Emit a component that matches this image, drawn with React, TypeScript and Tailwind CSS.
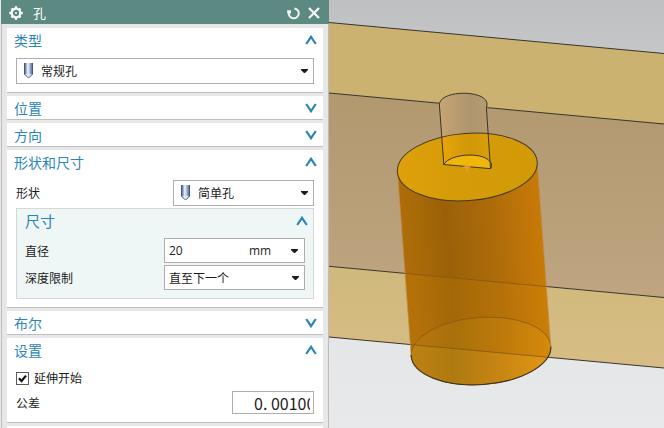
import React, { useState } from 'react';
import clsx from 'clsx';

interface SectionProps {
  title: string;
  open: boolean;
  onToggle: () => void;
  children?: React.ReactNode;
}

function Chevron({ open }: { open: boolean }) {
  return (
    <svg width="12" height="10" viewBox="0 0 12 10" fill="none" stroke="#2a86b8" strokeWidth="2.2">
      {open ? <path d="M1.2 9 L6 1.8 L10.8 9" /> : <path d="M1.2 1 L6 8.2 L10.8 1" />}
    </svg>
  );
}

function Caret() {
  return (
    <svg width="7" height="4" viewBox="0 0 7 4" className="pointer-events-none absolute right-[6px] top-1/2 -translate-y-1/2">
      <path d="M0 0 H7 V1 L4 4 H3 L0 1 Z" fill="#1c1c1c" />
    </svg>
  );
}

function HoleIcon() {
  return (
    <svg width="11" height="16" viewBox="0 0 11 16" className="pointer-events-none absolute left-[7px] top-1/2 -translate-y-1/2">
      <defs>
        <linearGradient id="hole" x1="0" x2="1" y1="0" y2="0">
          <stop offset="0" stopColor="#35497a" />
          <stop offset="0.2" stopColor="#8390b4" />
          <stop offset="0.42" stopColor="#f4f6fa" />
          <stop offset="0.65" stopColor="#a9b5d3" />
          <stop offset="1" stopColor="#3c5189" />
        </linearGradient>
      </defs>
      <path d="M1 0 H10 V11 L5.5 15.4 L1 11 Z" fill="url(#hole)" />
      <path d="M1.5 0 V11 L5.5 15 L9.5 11 V0" fill="none" stroke="#3f5488" />
      <path d="M2 11 H9 L5.5 14.4 Z" fill="#dfe4ef" />
    </svg>
  );
}

function Section({ title, open, onToggle, children }: SectionProps) {
  return (
    <section className="border-b border-[#c0c0c0] bg-white">
      <button
        onClick={onToggle}
        aria-expanded={open}
        className={clsx('flex w-full items-center justify-between pl-[7px] pr-[6px] text-sm leading-6 text-[#2a86b8]', open ? 'h-6' : 'h-[23px]')}
      >
        {title}
        <Chevron open={open} />
      </button>
      {open && <div className="px-[9px] pb-2 pt-[6px]">{children}</div>}
    </section>
  );
}

interface DropdownProps {
  id: string;
  label?: string;
  options: string[];
  icon?: boolean;
}

function Dropdown({ id, label, options, icon }: DropdownProps) {
  return (
    <div className="relative">
      {icon && <HoleIcon />}
      <select
        id={id}
        aria-label={label}
        className={clsx('block w-full appearance-none border border-[#adadad] bg-white text-xs text-[#1c1c1c]', icon ? 'h-[26px] pl-6' : 'h-[25px] pl-1')}
      >
        {options.map(option => (
          <option key={option}>{option}</option>
        ))}
      </select>
      <Caret />
    </div>
  );
}

function Viewport() {
  return (
    <svg viewBox="329 0 335 428" preserveAspectRatio="xMidYMid slice" className="h-full w-full" role="img">
      <defs>
        <linearGradient id="sky" x1="0" x2="0" y1="0" y2="1">
          <stop offset="0" stopColor="#bfc0c2" />
          <stop offset="0.8" stopColor="#e4e6e8" />
          <stop offset="1" stopColor="#e7e9eb" />
        </linearGradient>
        <linearGradient id="wall" x1="0" x2="0" y1="0" y2="1">
          <stop offset="0" stopColor="#b1986f" />
          <stop offset="1" stopColor="#bfa580" />
        </linearGradient>
        <linearGradient id="ledge" x1="0" x2="0" y1="0" y2="1">
          <stop offset="0" stopColor="#d0b97c" />
          <stop offset="1" stopColor="#d7bd85" />
        </linearGradient>
        <linearGradient id="body" gradientUnits="userSpaceOnUse" x1="385" x2="525" y1="0" y2="0" gradientTransform="skewX(4.2)">
          <stop offset="0" stopColor="#b06d0a" />
          <stop offset="0.15" stopColor="#a66808" />
          <stop offset="0.32" stopColor="#9b6007" />
          <stop offset="0.45" stopColor="#a26509" />
          <stop offset="0.7" stopColor="#b06d0a" />
          <stop offset="0.88" stopColor="#c07508" />
          <stop offset="1" stopColor="#c67a06" />
        </linearGradient>
        <linearGradient id="base" x1="0" x2="1" y1="0" y2="0">
          <stop offset="0" stopColor="#b9770d" />
          <stop offset="0.3" stopColor="#a8700b" />
          <stop offset="0.65" stopColor="#bd7a0b" />
          <stop offset="1" stopColor="#d68a0a" />
        </linearGradient>
        <linearGradient id="baseLow" gradientUnits="userSpaceOnUse" x1="411" x2="551" y1="0" y2="0">
          <stop offset="0" stopColor="#bf8012" />
          <stop offset="0.3" stopColor="#ae7a10" />
          <stop offset="0.65" stopColor="#c98612" />
          <stop offset="1" stopColor="#e39714" />
        </linearGradient>
        <linearGradient id="top" x1="0" x2="1" y1="0" y2="0">
          <stop offset="0" stopColor="#dea10b" />
          <stop offset="0.4" stopColor="#d59b08" />
          <stop offset="1" stopColor="#d39a08" />
        </linearGradient>
        <linearGradient id="bore" x1="0" x2="1" y1="0" y2="0">
          <stop offset="0" stopColor="#c7a473" />
          <stop offset="0.6" stopColor="#ae956f" />
          <stop offset="1" stopColor="#b59c74" />
        </linearGradient>
        <linearGradient id="boreTop" x1="0" x2="1" y1="0" y2="0">
          <stop offset="0" stopColor="#eaa606" />
          <stop offset="0.6" stopColor="#d09709" />
          <stop offset="1" stopColor="#dc9f08" />
        </linearGradient>
        <clipPath id="bodyClip">
          <path d="M397.3 170 V130 H537.3 V163 L550.8 347 V400 H411.1 V355 Z" />
        </clipPath>
        <clipPath id="hullClip">
          <path d="M397.3 170 L411.1 355 L550.8 347 L537.3 163 Z" />
          <ellipse cx="481" cy="351" rx="70.1" ry="33.6" transform="rotate(-4.15 481 351)" />
        </clipPath>
        <clipPath id="baseClip">
          <ellipse cx="481" cy="351" rx="70.1" ry="33.6" transform="rotate(-4.15 481 351)" />
        </clipPath>
        <clipPath id="frontClip">
          <path d="M405 355.4 L557 346.6 V400 H405 Z" />
        </clipPath>
        <clipPath id="topClip">
          <ellipse cx="467.3" cy="167" rx="70.1" ry="33.6" transform="rotate(-4.15 467.3 167)" />
        </clipPath>
      </defs>

      {/* block */}
      <rect x="329" width="335" height="428" fill="url(#sky)" />
      <path d="M329 22.5 L664 53.5 V124 L329 93 Z" fill="#cbb271" />
      <path d="M329 93 L664 124 V297.5 L329 266.3 Z" fill="url(#wall)" />
      <path d="M329 266.3 L664 297.5 V368 L329 337 Z" fill="url(#ledge)" />
      <g stroke="#37352d" strokeWidth="1">
        <path d="M329 22.5 L664 53.5" />
        <path d="M329 93 L664 124" />
        <path d="M329 266.3 L664 297.5" />
        <path d="M329 337 L664 368" />
      </g>

      {/* large cylinder */}
      <g clipPath="url(#hullClip)">
        <rect x="390" y="130" width="170" height="260" fill="url(#body)" />
        <path d="M329 266.3 L664 297.5 V400 H329 Z" fill="#e39c08" opacity="0.12" />
        <path d="M329 266.3 L664 297.5" stroke="#87570e" strokeWidth="0.8" />
      </g>
      <g clipPath="url(#baseClip)">
        <rect x="411" y="315" width="140" height="72" fill="url(#base)" />
        <path d="M329 337 L664 368 V400 H329 Z" fill="url(#baseLow)" />
      </g>
      <g clipPath="url(#bodyClip)">
        <path d="M329 337 L664 368" stroke="#855510" strokeWidth="0.8" />
      </g>
      <ellipse cx="481" cy="351" rx="70.1" ry="33.6" transform="rotate(-4.15 481 351)" fill="none" stroke="#8d5b10" strokeWidth="0.9" />
      <g clipPath="url(#frontClip)">
        <ellipse cx="481" cy="351" rx="70.1" ry="33.6" transform="rotate(-4.15 481 351)" fill="none" stroke="#3b3225" strokeWidth="1" />
      </g>
      <path d="M397.3 170 L411.1 355 M537.3 163 L550.8 347" stroke="#bd9153" strokeWidth="0.7" />
      <ellipse cx="467.3" cy="167" rx="70.1" ry="33.6" transform="rotate(-4.15 467.3 167)" fill="url(#top)" />

      {/* small bore */}
      <path d="M443.8 164.5 L439.4 105 C439 89.5 487 89.5 487 104 L491 168.7 Z" fill="url(#bore)" />
      <g clipPath="url(#topClip)">
        <path d="M439.3 105 L487 104 L491 168.7 L443.8 164.5 Z" fill="url(#boreTop)" />
      </g>
      <ellipse cx="467.3" cy="167" rx="70.1" ry="33.6" transform="rotate(-4.15 467.3 167)" fill="none" stroke="#443a23" strokeWidth="1" />
      <path d="M443.8 164.5 C450 153 487 151 491.5 164 Q491.8 166.5 490.7 168.7 Z" fill="#f0b60a" />
      <g fill="none" stroke="#39352a" strokeWidth="1">
        <path d="M443.8 164.5 L439.4 105 C439 89.5 487 89.5 487 104 Q487 106 486.4 108 L490.5 168.5" />
        <path d="M443.8 164.5 C450 153 487 151 491.5 164 Q491.8 166.5 490.7 168.7 Z" />
      </g>
      <path d="M467 162.5 V171.5 M463.5 167 H470.5" stroke="#f39b40" strokeWidth="1.3" />
    </svg>
  );
}

function App() {
  const [open, setOpen] = useState({
    type: true,
    position: false,
    direction: false,
    shape: true,
    boolean: false,
    settings: true
  });
  const [sizeOpen, setSizeOpen] = useState(true);
  const [extendStart, setExtendStart] = useState(true);
  const [diameter, setDiameter] = useState('20');
  const [tolerance, setTolerance] = useState('0. 00100');

  const toggle = (key: keyof typeof open) => setOpen(prev => ({ ...prev, [key]: !prev[key] }));

  return (
    <div className="flex h-screen overflow-hidden bg-[#e7e9eb] font-['Noto_Sans_CJK_SC',sans-serif] text-xs text-[#1c1c1c]">
      <aside className="flex w-[329px] shrink-0 flex-col overflow-hidden pl-px">
        <header className="flex h-6 shrink-0 items-center bg-[#5c8a82] pl-2 pr-[9px] pt-[2px] text-white">
          <svg width="14" height="14" viewBox="0 0 14 14" fill="none" stroke="white">
            <circle cx="7" cy="7" r="4.3" strokeWidth="2.2" />
            <g strokeWidth="2.4">
              <path d="M7 0.3 V3 M7 11 V13.7 M0.3 7 H3 M11 7 H13.7" />
              <path d="M2.5 2.5 L4 4 M10 10 L11.5 11.5 M11.5 2.5 L10 4 M4 10 L2.5 11.5" />
            </g>
            <circle cx="7" cy="7" r="1" fill="white" stroke="none" />
          </svg>
          <h1 className="ml-[10px] text-[13px] leading-5">孔</h1>
          <button aria-label="重置" className="ml-auto">
            <svg width="13" height="13" viewBox="0 0 13 13" fill="none" stroke="#f0f5f4" strokeWidth="2">
              <path d="M7.4 1.4 A5 5 0 1 1 1.9 5.2" />
              <path d="M0 3.2 H4 V6.4 H0.4 Z" fill="#f0f5f4" stroke="none" />
            </svg>
          </button>
          <button aria-label="关闭" className="ml-2">
            <svg width="12" height="12" viewBox="0 0 12 12" stroke="white" strokeWidth="2.2">
              <path d="M1 1 L11 11 M11 1 L1 11" />
            </svg>
          </button>
        </header>

        <div className="flex flex-1 flex-col gap-[3px] border-x border-[#bcbcbc] bg-[#e7e7e7] px-[5px] pt-1">
          <Section title="类型" open={open.type} onToggle={() => toggle('type')}>
            <Dropdown id="type" label="类型" options={['常规孔']} icon />
          </Section>
          <Section title="位置" open={open.position} onToggle={() => toggle('position')} />
          <Section title="方向" open={open.direction} onToggle={() => toggle('direction')} />
          <Section title="形状和尺寸" open={open.shape} onToggle={() => toggle('shape')}>
            <div className="flex items-center justify-between">
              <label htmlFor="shape">形状</label>
              <div className="w-[141px]">
                <Dropdown id="shape" options={['简单孔']} icon />
              </div>
            </div>
            <div className="mt-[2px] border border-[#d5d8d8] bg-[#eff6f6] pb-2">
              <button
                onClick={() => setSizeOpen(!sizeOpen)}
                aria-expanded={sizeOpen}
                className="flex h-6 w-full items-center justify-between pl-2 pr-[5px] text-[15px] leading-6 text-[#2a86b8]"
              >
                尺寸
                <Chevron open={sizeOpen} />
              </button>
              {sizeOpen && (
                <div className="flex flex-col gap-[2px] px-2 pt-[5px]">
                  <div className="flex items-center justify-between">
                    <label htmlFor="diameter">直径</label>
                    <div className="relative flex h-[25px] w-[141px] border border-[#adadad] bg-white">
                      <input
                        id="diameter"
                        value={diameter}
                        onChange={(e) => setDiameter(e.target.value)}
                        className="w-20 min-w-0 pl-1 font-['Open_Sans',sans-serif]"
                      />
                      <select aria-label="单位" className="flex-1 appearance-none pl-1 font-['Open_Sans',sans-serif]">
                        <option>mm</option>
                      </select>
                      <Caret />
                    </div>
                  </div>
                  <div className="flex items-center justify-between">
                    <label htmlFor="depth">深度限制</label>
                    <div className="w-[141px]">
                      <Dropdown id="depth" options={['直至下一个']} />
                    </div>
                  </div>
                </div>
              )}
            </div>
          </Section>
          <Section title="布尔" open={open.boolean} onToggle={() => toggle('boolean')} />
          <Section title="设置" open={open.settings} onToggle={() => toggle('settings')}>
            <label className="flex h-5 items-center gap-[5px]">
              <span className="relative flex">
                <input
                  type="checkbox"
                  checked={extendStart}
                  onChange={(e) => setExtendStart(e.target.checked)}
                  className="h-[13px] w-[13px] appearance-none border border-[#5a5a5a] bg-white"
                />
                {extendStart && (
                  <svg width="13" height="13" viewBox="0 0 13 13" className="pointer-events-none absolute inset-0">
                    <path d="M3 6.2 L5.5 9 L10 3.6" fill="none" stroke="#111" strokeWidth="2.2" />
                  </svg>
                )}
              </span>
              延伸开始
            </label>
            <div className="mt-[3px] flex items-center justify-between">
              <label htmlFor="tolerance">公差</label>
              <div className="h-[23px] w-[82px] border border-[#adadad] bg-white pl-[21px] pr-[3px]">
                <input
                  id="tolerance"
                  value={tolerance}
                  onChange={(e) => setTolerance(e.target.value)}
                  className="block h-full w-full text-base leading-5"
                />
              </div>
            </div>
          </Section>
          <section className="flex-1 bg-white" />
        </div>
      </aside>
      <main className="min-w-0 flex-1">
        <Viewport />
      </main>
    </div>
  );
}

export default App;
